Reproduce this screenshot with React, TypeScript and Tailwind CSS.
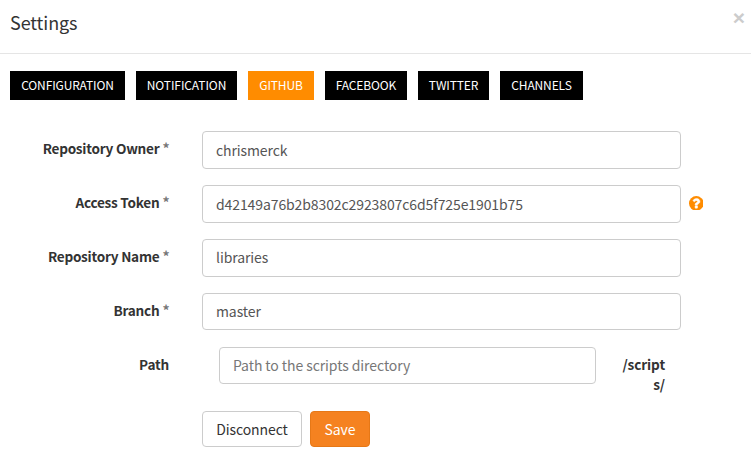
const tabs = [
  { name: 'CONFIGURATION', width: 'w-[115px]', spacing: 'tracking-[-0.13px]' },
  { name: 'NOTIFICATION', width: 'w-[101px]', spacing: 'tracking-[-0.1px]' },
  { name: 'GITHUB', width: 'w-[66px]', spacing: 'tracking-[-0.15px]', active: true },
  { name: 'FACEBOOK', width: 'w-[82px]', spacing: 'tracking-[-0.15px]' },
  { name: 'TWITTER', width: 'w-[71px]', spacing: 'tracking-[-0.15px]' },
  { name: 'CHANNELS', width: 'w-[83px]', spacing: 'tracking-[-0.15px]' },
];

const fields = [
  { label: 'Repository Owner', value: 'chrismerck', height: 'h-[38px]' },
  { label: 'Access Token', value: 'd42149a76b2b8302c2923807c6d5f725e1901b75', height: 'h-[38px]', help: true },
  { label: 'Repository Name', value: 'libraries', height: 'h-[38px] pb-[2px]' },
  { label: 'Branch', value: 'master', height: 'h-[37px] pb-[2px]' },
];

function HelpIcon() {
  return (
    <svg className="mt-[10.700px] ml-[7.700px] size-[14.600px]" viewBox="0 0 1536 1536">
      <circle cx="768" cy="768" r="768" fill="#ff8c00" />
      <path
        fill="#fff"
        stroke="#fff"
        strokeWidth="50"
        d="M896 1248v-192q0-14-9-23t-23-9H672q-14 0-23 9t-9 23v192q0 14 9 23t23 9h192q14 0 23-9t9-23zm256-672q0-88-55.500-163t-138.500-116-170-41q-243 0-371 213-15 24 8 42l132 100q7 6 19 6 16 0 25-12 53-68 86-92 34-24 86-24 48 0 85.500 26t37.500 59q0 38-20 61t-68 45q-63 28-115.500 86.500T640 892v36q0 14 9 23t23 9h192q14 0 23-9t9-23q0-19 21.500-49.500T972 829q32-18 49-28.500t46-35 44.500-48 28-60.500 12.500-81z"
      />
    </svg>
  );
}

export default function App() {
  return (
    <main className="h-[465px] w-[751px] overflow-hidden bg-white font-['Noto_Sans_CJK_SC',sans-serif] text-[14px] leading-5 text-[#333]">
      <header className="flex h-[54px] justify-between border-b border-[#e5e5e5] pr-[6px] pl-[10px]">
        <h1 className="mt-[9px] text-[18px] leading-[26px] tracking-[-0.1px]">Settings</h1>
        <button aria-label="Close" className="mt-[7px] h-[21px] font-['Liberation_Sans',sans-serif] text-[21px] leading-[21px] font-bold text-[#ccc]">×</button>
      </header>
      <nav className="mt-[17px] flex gap-[11px] pl-[10px]">
        {tabs.map((tab) => (
          <button
            key={tab.name}
            className={`${tab.width} ${tab.spacing} h-[29px] pb-[2px] text-[12px] leading-[27px] whitespace-nowrap text-white ${tab.active ? 'bg-[#ff8c00]' : 'bg-black'}`}
          >
            {tab.name}
          </button>
        ))}
      </nav>
      <form className="mt-[31px]">
        {fields.map((field) => (
          <div key={field.label} className="flex h-[54px]">
            <label className="mt-[7px] mr-[33px] flex w-[169px] justify-end gap-[3px] font-bold">
              <span className="text-[13.600px] tracking-[-0.250px]">{field.label}</span>
              <span className="w-[6.600px] text-[14px] text-[#777]">*</span>
            </label>
            <input
              className={`${field.height} w-[479px] rounded border border-[#ccc] px-[13px] tracking-[-0.1px] text-[#555]`}
              defaultValue={field.value}
            />
            {field.help && <HelpIcon />}
          </div>
        ))}
        <div className="flex h-[64px]">
          <label className="mt-[7px] mr-[50px] w-[169px] text-right text-[13.600px] font-bold tracking-[-0.2px]">Path</label>
          <input
            className="h-[37px] w-[377px] rounded border border-[#ccc] px-[13px] pb-[2px] tracking-[-0.08px] text-[#555] placeholder:text-[#777]"
            placeholder="Path to the scripts directory"
          />
          <span className="mt-[7px] ml-[24px] w-[45px] text-right text-[13.600px] font-bold tracking-[-0.1px] break-all">/scripts/</span>
        </div>
        <div className="flex gap-2 pl-[202px]">
          <button type="button" className="h-9 w-[100px] rounded border border-[#ccc] bg-white tracking-[-0.1px]">Disconnect</button>
          <button type="button" className="h-9 w-[60px] rounded border border-[#e67817] bg-[#f58220] text-white">Save</button>
        </div>
      </form>
    </main>
  );
}
